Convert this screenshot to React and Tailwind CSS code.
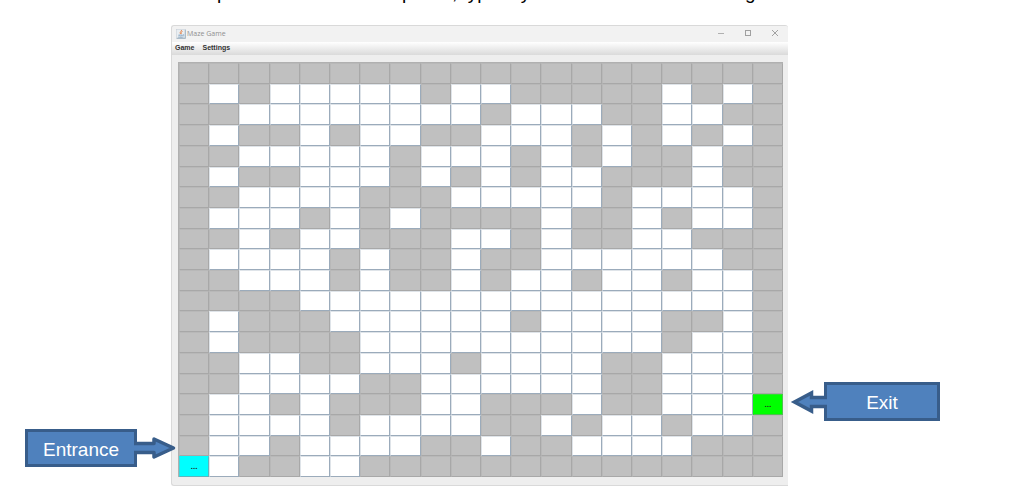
import React from "react";

// 1 = wall, 0 = open path, S = entrance, E = exit
const MAZE = [
  "11111111111111111111",
  "10100000100111110101",
  "11000000001000110011",
  "10110100110001010101",
  "11000001000101011011",
  "10110001010100111011",
  "11000011100000100001",
  "10001010111101101001",
  "11010011100101100111",
  "10000101101100000011",
  "11000101101001001001",
  "11110000000000000001",
  "10111000000100001101",
  "10111100000000001001",
  "11001100010000110001",
  "11000011000000110001",
  "1001011100111011000E",
  "10000100001101001001",
  "10010000110110000111",
  "S0110011111111111111",
];

const CELL = {
  1: { name: "Wall", look: "bg-[#c0c0c0] border-r-[#a8a8a8] border-b-[#a8a8a8] border-t-[#b8b8b8] border-l-[#b8b8b8]" },
  0: { name: "Path", look: "bg-white border-r-[#9babbb] border-b-[#9babbb] border-t-[#dfe4e9] border-l-[#dfe4e9]" },
  S: { name: "Entrance", look: "bg-[#00ffff] border-r-[#5fb5bd] border-b-[#5fb5bd] border-t-[#00ffff] border-l-[#3fd8de]" },
  E: { name: "Exit", look: "bg-[#00ff00] border-r-[#4fc04f] border-b-[#4fc04f] border-t-[#2fe02f] border-l-[#00ff00]" },
};

function Cell({ kind, row, col }) {
  const { name, look } = CELL[kind];
  return (
    <button
      type="button"
      aria-label={`${name}, row ${row + 1}, column ${col + 1}`}
      className={`flex min-h-0 min-w-0 items-center justify-center border text-[8px] leading-none font-bold text-[#222222] ${look}`}
    >
      {kind === "S" || kind === "E" ? "..." : null}
    </button>
  );
}

function JavaIcon() {
  return (
    <svg viewBox="0 0 20 20" className="size-[10px] shrink-0" aria-hidden="true">
      <rect x="0.5" y="0.5" width="19" height="19" fill="#e9eef2" stroke="#c3ccd4" />
      <path d="M18.500 2v16.500H2" fill="none" stroke="#9fb0bf" strokeWidth="2" />
      <path d="M11 2c1 3-5 4-2 8M13 5c-3 2-4 2-2 5" fill="none" stroke="#e58a55" strokeWidth="2" />
      <path d="M5 12h8c0 3-7 3-8 0zM14 11c3 0 2 3-1 3M4 16c3 1 9 1 11 0" fill="none" stroke="#7f9fbd" strokeWidth="1.4" />
    </svg>
  );
}

function WindowButtons() {
  return (
    <div className="flex items-center gap-[17px] pr-2">
      <button type="button" aria-label="Minimize" className="flex size-[10px] items-center justify-center">
        <svg viewBox="0 0 10 10" className="size-[10px]"><path d="M2 4.500h6" stroke="#b0b0b0" /></svg>
      </button>
      <button type="button" aria-label="Maximize" className="flex size-[10px] items-center justify-center">
        <svg viewBox="0 0 10 10" className="size-[10px]"><rect x="2.5" y="1.5" width="5" height="5" fill="none" stroke="#a0a0a0" /></svg>
      </button>
      <button type="button" aria-label="Close" className="flex size-[10px] items-center justify-center">
        <svg viewBox="0 0 10 10" className="size-[10px]"><path d="M2 1l6 6M8 1l-6 6" stroke="#999999" strokeWidth="0.9" /></svg>
      </button>
    </div>
  );
}

function MazeWindow() {
  return (
    <section className="min-w-0 rounded-t-[3px] rounded-bl-[3px] border border-r-0 border-[#d9d9d9] bg-[#eeeeee]">
      <header className="flex h-4 items-center justify-between rounded-t-[3px] bg-[#f2f2f2] pl-1">
        <div className="flex items-center gap-px">
          <JavaIcon />
          <h1 className="font-['Open_Sans',sans-serif] text-[7px] leading-[10px] text-[#8f8f8f]">Maze Game</h1>
        </div>
        <WindowButtons />
      </header>
      <nav className="flex h-[13px] items-center gap-2 bg-linear-to-b from-white to-[#dadada] pb-px pl-[3px] text-[7px] leading-[10px] font-bold text-[#333333]">
        <button type="button">Game</button>
        <button type="button">Settings</button>
      </nav>
      <div className="pt-[7px] pr-[5px] pb-2 pl-[6px]">
        <div className="grid aspect-[605/415] grid-cols-20 grid-rows-20 border-t border-l border-[#b0b0b0]">
          {MAZE.map((line, row) =>
            [...line].map((kind, col) => <Cell key={`${row}-${col}`} kind={kind} row={row} col={col} />)
          )}
        </div>
      </div>
    </section>
  );
}

export default function App() {
  return (
    <div className="overflow-hidden bg-white font-['Liberation_Sans',Arial,sans-serif] text-black">
      <div className="h-[25px] overflow-hidden">
        <p className="-mt-[18px] flex pl-[217px] text-[19px] leading-[22px]">
          <span className="w-[185px]">p</span>
          <span className="w-[50px]">p</span>
          <span className="w-[293px]">, typically</span>
          <span>g</span>
        </p>
      </div>
      <main className="grid grid-cols-[171fr_617fr_239fr]">
        <div className="z-10 -mr-[6px] flex items-end justify-end pb-[19px]">
          <div className="flex items-center">
            <div className="flex h-[38px] w-28 items-center justify-center border-[3px] border-[#385d8a] bg-[#4f81bd] pt-[3px] text-[19px] leading-[22px] text-white">
              Entrance
            </div>
            <svg viewBox="0 0 43 24" className="-ml-[3px] h-6 w-[43px]" aria-hidden="true">
              <path d="M0 7.5H20V3L39.5 12L20 21V16.5H0" fill="#4f81bd" stroke="#385d8a" strokeWidth="3.500" strokeLinejoin="round" />
            </svg>
          </div>
        </div>
        <MazeWindow />
        <div className="flex items-end pb-[65px]">
          <div className="flex items-center">
            <svg viewBox="0 0 39 26" className="z-10 -mr-[3px] h-[26px] w-[39px]" aria-hidden="true">
              <path d="M39 8.5H23.500V4L6.500 13L23.500 22V17.500H39" fill="#4f81bd" stroke="#385d8a" strokeWidth="3.500" />
            </svg>
            <div className="flex h-[39px] w-[116px] items-center justify-center border-[3px] border-[#385d8a] bg-[#4f81bd] pt-[3px] text-[19px] leading-[22px] text-white">
              Exit
            </div>
          </div>
        </div>
      </main>
    </div>
  );
}
